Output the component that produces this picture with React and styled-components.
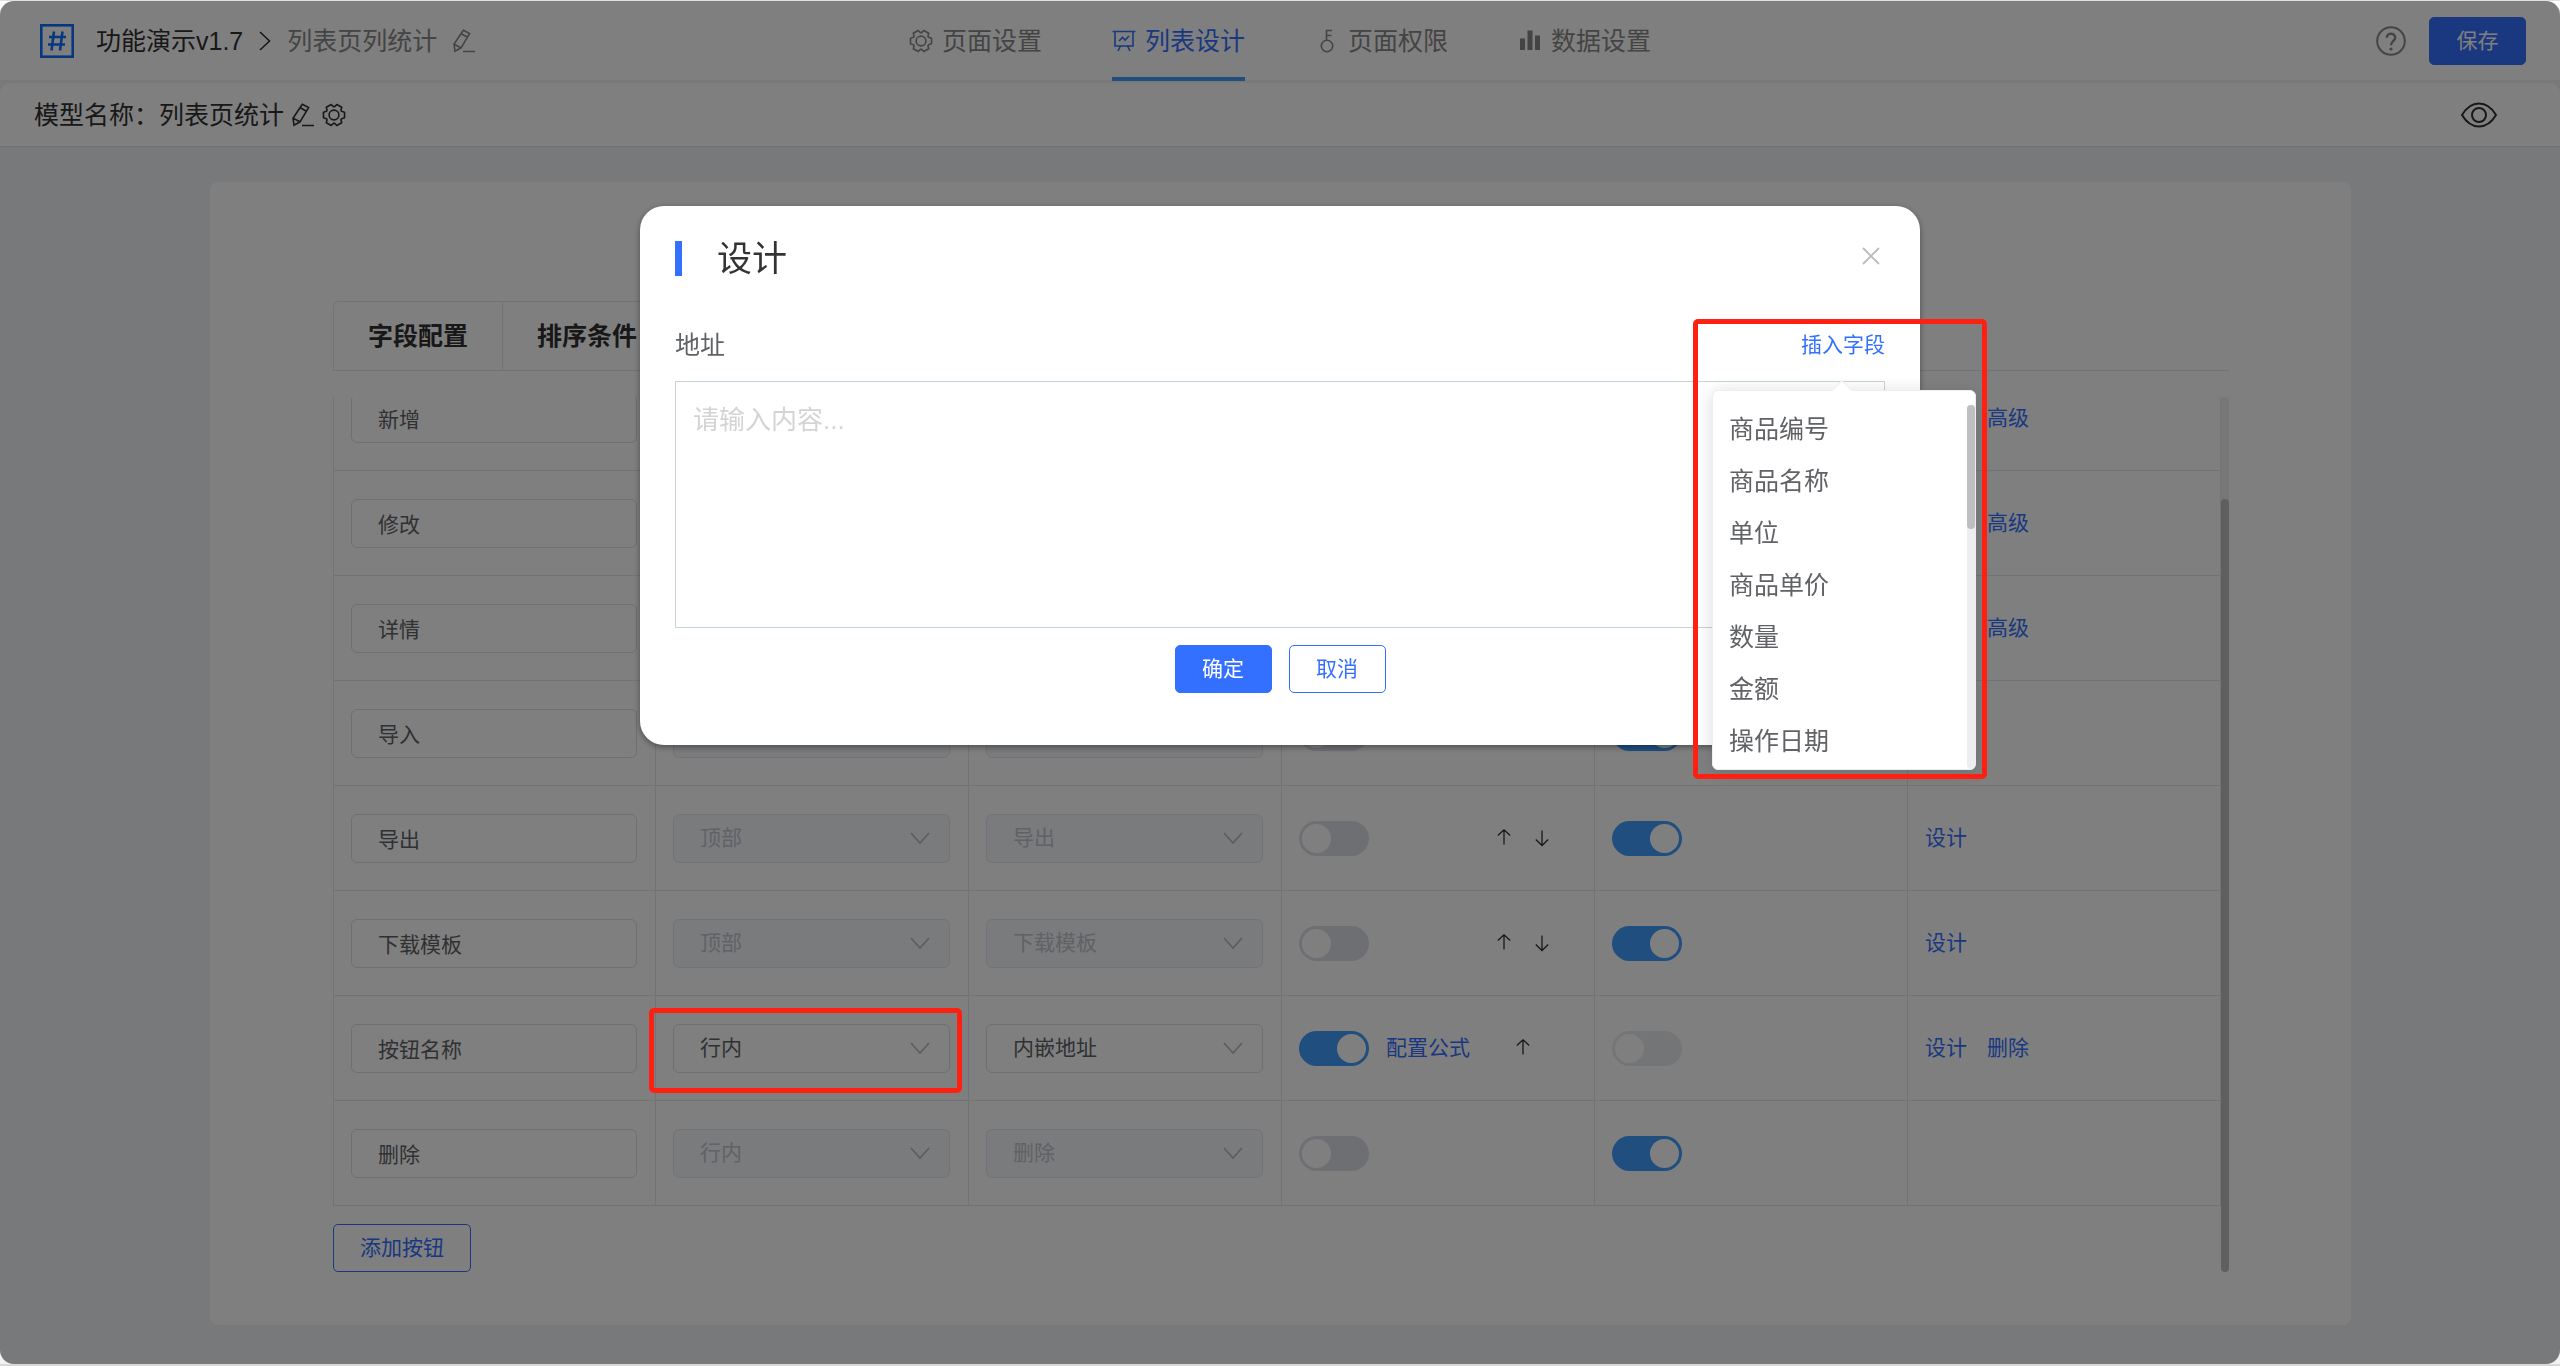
import React from "react";
import styled, { createGlobalStyle, css } from "styled-components";

const blue = "#3370ff";
const line = "#e4e7ed";
const font = `"Liberation Sans", "Noto Sans CJK SC", sans-serif`;

const Global = createGlobalStyle`
  *, *::before, *::after { box-sizing: border-box; }
  html, body { margin: 0; background: #fff; }
  body, button, input, select, textarea { font-family: ${font}; font-size: 21px; line-height: 30px; }
  body { color: #303133; }
  button { cursor: pointer; }
  svg { display: block; flex: none; }
`;

const Page = styled.div`
  min-height: 100vh;
  display: flex;
  flex-direction: column;
  gap: 3px;
  background: #f0f2f5;
  border-top: 1px solid #dfe2e2;
  border-bottom: 2px solid #d8d8d8;
`;

const Header = styled.header`
  height: 79px;
  padding: 0 34px;
  background: #fff;
  display: grid;
  grid-template-columns: 1fr auto 1fr;
  align-items: center;
  font-size: 25px;
`;

const Crumbs = styled.div`
  padding-left: 6px;
  display: flex;
  align-items: center;
  gap: 16px;
  color: #888;
`;

const Brand = styled.span`
  display: flex;
  align-items: center;
  gap: 22px;
  color: #303133;
`;

const Nav = styled.nav`
  display: flex;
  align-self: stretch;
  gap: 70px;
`;

const NavTab = styled.a`
  width: 133px;
  display: flex;
  align-items: center;
  justify-content: space-between;
  position: relative;
  white-space: nowrap;
  text-decoration: none;
  color: ${(p) => (p.$active ? blue : "#888")};
  ${(p) =>
    p.$active &&
    css`
      &::after {
        content: "";
        position: absolute;
        left: 0;
        right: 0;
        bottom: -1px;
        height: 4px;
        background: #409eff;
      }
    `}
`;

const HeaderTools = styled.div`
  display: flex;
  justify-content: flex-end;
  align-items: center;
  gap: 23px;
`;

const IconButton = styled.button`
  padding: 0;
  border: 0;
  background: none;
  color: ${(p) => p.$color || "inherit"};
`;

const Button = styled.button`
  flex: none;
  min-width: 97px;
  height: 48px;
  padding: 0 26px;
  border: 1px solid ${blue};
  border-radius: 5px;
  color: ${(p) => (p.$primary ? "#fff" : blue)};
  background: ${(p) => (p.$primary ? blue : "#fff")};
`;

const SubHeader = styled.div`
  height: 64px;
  padding: 0 63px 0 34px;
  display: flex;
  align-items: center;
  justify-content: space-between;
  background: #fff;
  border-bottom: 1px solid #dfe3ea;
  border-radius: 10px 10px 0 0;
  font-size: 25px;
`;

const ModelName = styled.div`
  display: flex;
  align-items: center;
  gap: 8px;
`;

const Main = styled.main`
  flex: 1;
  display: flex;
  padding: 32px 209px 39px 210px;
`;

const Card = styled.section`
  flex: 1;
  min-width: 0;
  display: flex;
  flex-direction: column;
  padding: 119px 122px 53px 123px;
  background: #fff;
  border-radius: 8px;
`;

const CardTabs = styled.div`
  display: flex;
  border-bottom: 1px solid ${line};
`;

const CardTab = styled.button`
  height: 69px;
  padding: 0 34px;
  background: none;
  border: solid ${line};
  border-width: 1px 1px 0 0;
  font-size: 25px;
  font-weight: 700;
  color: #303133;
  &:first-child {
    border-left-width: 1px;
    border-top-left-radius: 6px;
  }
`;

const Scroller = styled.div`
  margin-top: 26px;
  flex: 1;
  display: grid;
  grid-template-columns: minmax(0, 1fr) 8px;
  max-height: 875px;
`;

const ScrollView = styled.div`
  overflow: hidden;
  min-height: 0;
  display: flex;
  flex-direction: column;
  justify-content: flex-end;
  align-items: flex-start;
  gap: 18px;
`;

const Track = styled.div`
  display: flex;
  flex-direction: column;
  justify-content: ${(p) => (p.$atEnd ? "flex-end" : "flex-start")};
  background: #eee;
  border-radius: 4px;
`;

const Thumb = styled.div`
  height: ${(p) => p.$size};
  border-radius: 4px;
  background: #bfbfbf;
`;

const Table = styled.table`
  flex: none;
  width: 100%;
  table-layout: fixed;
  border-collapse: separate;
  border-spacing: 0;
`;

const NameCol = styled.col`
  width: 323px;
`;

const Cell = styled.td`
  height: 105px;
  padding: 0 18px 0 17px;
  border: solid ${line};
  border-width: 0 1px 1px 0;
  &:first-child {
    border-left-width: 1px;
  }
`;

const field = css`
  width: 100%;
  height: 49px;
  padding: 0 26px;
  border: 1px solid ${(p) => (p.disabled ? line : "#dcdfe6")};
  border-radius: 6px;
  background: ${(p) => (p.disabled ? "#f5f7fa" : "#fff")};
  color: ${(p) => (p.disabled ? "#c0c4cc" : "#606266")};
  outline: 0;
  opacity: 1;
`;

const TextField = styled.input`
  ${field}
  display: block;
`;

const SelectBox = styled.div`
  position: relative;
  svg {
    position: absolute;
    right: 20px;
    top: 18px;
    color: #b4b8bf;
    pointer-events: none;
  }
`;

const SelectField = styled.select`
  ${field}
  display: block;
  appearance: none;
`;

const Switch = styled.input`
  appearance: none;
  display: block;
  flex: none;
  width: 70px;
  height: 35px;
  margin: 0;
  padding: 3px;
  border-radius: 18px;
  background: ${(p) => (p.defaultChecked ? "#409eff" : "#dcdfe6")};
  opacity: ${(p) => (p.disabled ? 0.6 : 1)};
  &::before {
    content: "";
    display: block;
    width: 29px;
    height: 29px;
    margin-left: ${(p) => (p.defaultChecked ? "auto" : 0)};
    border-radius: 50%;
    background: #fff;
  }
`;

const ShowCell = styled.div`
  display: grid;
  grid-template-columns: 70px 84px 1fr;
  column-gap: 17px;
  align-items: center;
`;

const Arrows = styled.div`
  grid-column: 3;
  padding-right: 18px;
  display: flex;
  justify-content: center;
  gap: 22px;
`;

const Links = styled.div`
  display: flex;
  gap: 20px;
`;

const Link = styled.a`
  color: ${blue};
  text-decoration: none;
  white-space: nowrap;
`;

const Mark = styled.div`
  position: absolute;
  z-index: 30;
  inset: ${(p) => p.$inset};
  border: 5px solid #ff2012;
  border-radius: 5px;
  pointer-events: none;
`;

const Overlay = styled.div`
  position: fixed;
  z-index: 10;
  inset: 1px 0 2px;
  padding-top: 205px;
  border-radius: 14px;
  background: rgba(0, 0, 0, 0.5);
`;

const Dialog = styled.div`
  width: 50%;
  margin: 0 auto;
  padding: 35px 35px 52px;
  border-radius: 24px;
  background: #fff;
  box-shadow: 0 2px 6px rgba(0, 0, 0, 0.4);
`;

const DialogHead = styled.div`
  display: flex;
  align-items: flex-start;
  justify-content: space-between;
`;

const Title = styled.h2`
  margin: 0;
  padding-left: 35px;
  border-left: 7px solid ${blue};
  font-size: 35px;
  line-height: 35px;
  font-weight: 400;
  color: #333;
`;

const CloseButton = styled(IconButton)`
  padding: 6px 5px;
  color: #bbb;
`;

const FieldHead = styled.div`
  margin: 51px 0 18px;
  display: flex;
  align-items: center;
  justify-content: space-between;
`;

const Label = styled.label`
  font-size: 25px;
  line-height: 36px;
  color: #606266;
`;

const TextArea = styled.textarea`
  display: block;
  width: 100%;
  height: 247px;
  padding: 20px 17px;
  border: 1px solid #c6d3d9;
  font-size: 26px;
  line-height: 36px;
  resize: none;
  outline: 0;
  &::placeholder {
    color: #d4d4d4;
  }
`;

const DialogFoot = styled.div`
  margin-top: 17px;
  display: flex;
  justify-content: center;
  gap: 17px;
`;

const Anchor = styled.div`
  position: relative;
`;

const Popover = styled.div`
  position: absolute;
  z-index: 20;
  top: 60px;
  left: 50%;
  width: 264px;
  margin-left: -131px;
  padding: 14px 0;
  border: 1px solid #ebeef5;
  border-radius: 6px;
  background: #fff;
  box-shadow: 0 2px 18px rgba(0, 0, 0, 0.14);
  &::before {
    content: "";
    position: absolute;
    top: -8px;
    left: 50%;
    width: 14px;
    height: 14px;
    margin-left: -9px;
    background: #fff;
    border: solid #ebeef5;
    border-width: 1px 0 0 1px;
    transform: rotate(45deg);
  }
`;

const OptionArea = styled.div`
  display: grid;
  grid-template-columns: 1fr 8px;
  height: 350px;
`;

const Options = styled.ul`
  margin: 0;
  padding: 0 16px;
  list-style: none;
`;

const Option = styled.li`
  height: 52px;
  font-size: 25px;
  line-height: 48px;
  color: #606266;
`;

const Svg = ({ w, h = w, sw = 1.6, children }) => (
  <svg width={w} height={h} viewBox={`0 0 ${w} ${h}`} fill="none" stroke="currentColor" strokeWidth={sw} aria-hidden="true">
    {children}
  </svg>
);

const cog = Array.from({ length: 6 }, (_, i) =>
  [
    [-26, 8.4],
    [-15, 10.9],
    [15, 10.9],
    [26, 8.4],
  ].map(([d, r]) => {
    const a = ((i * 60 + d) * Math.PI) / 180;
    return `${(12 + r * Math.cos(a)).toFixed(2)},${(12 + r * Math.sin(a)).toFixed(2)}`;
  })
)
  .flat()
  .join(" ");

const Logo = () => (
  <Svg w={34} sw={2.6}>
    <g stroke="#0f6fff">
      <rect x="1.3" y="1.3" width="31.4" height="31.4" />
      <path d="M14 7.5 11.5 26.5M22.5 7.5 20 26.5M9 13h17M8 20.5h17" />
    </g>
  </Svg>
);
const Pencil = () => (
  <Svg w={22} h={24}>
    <path d="M10.300 1.200 16.600 4.600 8 18.800 2 22.300 1 15.200ZM8.300 4.700l6.200 3.500M1 15.200l7 3.600M10 22.500h12" />
  </Svg>
);
const Gear = () => (
  <Svg w={24}>
    <polygon points={cog} strokeLinejoin="round" />
    <circle cx="12" cy="12" r="4.900" />
  </Svg>
);
const Board = () => (
  <Svg w={24}>
    <path d="M.5 2.500h23M3 2.500v14.500h18V2.500M8.500 17 6 22M15.500 17 18 22M7 12l3.500-3.500 2.500 2.500L17 7" />
  </Svg>
);
const Key = () => (
  <Svg w={24}>
    <circle cx="12" cy="17" r="5.700" />
    <path d="M11.500 11.500V1.500h5.500M11.500 6.500h5" />
  </Svg>
);
const Bars = () => (
  <Svg w={24}>
    <path d="M2 9.500h5V21H2ZM9.500 1.500h5V21h-5ZM17 6.500h5V21h-5Z" fill="currentColor" stroke="none" />
  </Svg>
);
const Help = () => (
  <Svg w={30} sw={2}>
    <circle cx="15" cy="15" r="13.800" />
    <path d="M10.800 11.800c0-5.400 8.400-5.400 8.400 0 0 3.200-4.200 3.200-4.200 7.400" strokeWidth="2.400" />
    <circle cx="15" cy="23" r="1.600" fill="currentColor" stroke="none" />
  </Svg>
);
const Eye = () => (
  <Svg w={36} h={26} sw={2}>
    <path d="M1 13C10-2.300 26-2.300 35 13 26 28.300 10 28.300 1 13Z" />
    <circle cx="18" cy="13" r="7" />
  </Svg>
);
const Chevron = () => (
  <Svg w={20} h={13}>
    <path d="m1 1 9 10 9-10" />
  </Svg>
);
const Crumb = () => (
  <Svg w={12} h={20}>
    <path d="m1 1 9.500 9L1 19" stroke="#303133" />
  </Svg>
);
const Arrow = ({ down }) => (
  <Svg w={16} h={18} sw={1.3}>
    <path d={down ? "M8 1.500v15M1.800 10.500 8 16.500l6.200-6" : "M8 15.500v-15M1.800 6.500 8 .800l6.200 5.700"} />
  </Svg>
);
const Cross = () => (
  <Svg w={18} sw={1.8}>
    <path d="m1 1 16 16M17 1 1 17" />
  </Svg>
);

const tabs = [
  { text: "页面设置", Icon: Gear },
  { text: "列表设计", Icon: Board, active: true },
  { text: "页面权限", Icon: Key },
  { text: "数据设置", Icon: Bars },
];

const rows = [
  { name: "新增", place: "顶部", action: "新增", arrows: 1, on: true, links: ["设计", "高级"] },
  { name: "修改", place: "行内", action: "修改", arrows: 2, on: true, links: ["设计", "高级"] },
  { name: "详情", place: "行内", action: "详情", arrows: 2, on: true, links: ["设计", "高级"] },
  { name: "导入", place: "顶部", action: "导入", arrows: 2, on: true, links: ["设计"] },
  { name: "导出", place: "顶部", action: "导出", arrows: 2, on: true, links: ["设计"] },
  { name: "下载模板", place: "顶部", action: "下载模板", arrows: 2, on: true, links: ["设计"] },
  { name: "按钮名称", place: "行内", action: "内嵌地址", custom: true, arrows: 1, on: false, links: ["设计", "删除"] },
  { name: "删除", place: "行内", action: "删除", arrows: 0, on: true, links: [] },
];

const options = ["商品编号", "商品名称", "单位", "商品单价", "数量", "金额", "操作日期"];

function Picker({ label, value, disabled, marked }) {
  return (
    <SelectBox>
      <SelectField aria-label={label} disabled={disabled} defaultValue={value}>
        <option>{value}</option>
      </SelectField>
      <Chevron />
      {marked && <Mark $inset="-16px -12px -20px -24px" />}
    </SelectBox>
  );
}

function Row({ row }) {
  return (
    <tr>
      <Cell>
        <TextField aria-label="按钮名称" defaultValue={row.name} />
      </Cell>
      <Cell>
        <Picker label="位置" value={row.place} disabled={!row.custom} marked={row.custom} />
      </Cell>
      <Cell>
        <Picker label="动作" value={row.action} disabled={!row.custom} />
      </Cell>
      <Cell>
        <ShowCell>
          <Switch type="checkbox" role="switch" aria-label="条件" defaultChecked={!!row.custom} />
          {row.custom && <Link href="#formula">配置公式</Link>}
          <Arrows>
            {row.arrows > 0 && (
              <IconButton aria-label="上移">
                <Arrow />
              </IconButton>
            )}
            {row.arrows > 1 && (
              <IconButton aria-label="下移">
                <Arrow down />
              </IconButton>
            )}
          </Arrows>
        </ShowCell>
      </Cell>
      <Cell>
        <Switch type="checkbox" role="switch" aria-label="启用" defaultChecked={row.on} disabled={!row.on} />
      </Cell>
      <Cell>
        <Links>
          {row.links.map((t) => (
            <Link key={t} href="#row">
              {t}
            </Link>
          ))}
        </Links>
      </Cell>
    </tr>
  );
}

export default function App() {
  return (
    <>
      <Global />
      <Page>
        <Header>
          <Crumbs>
            <Brand>
              <Logo />
              功能演示v1.7
            </Brand>
            <Crumb />
            <span>列表页列统计</span>
            <IconButton aria-label="编辑" $color="#888">
              <Pencil />
            </IconButton>
          </Crumbs>
          <Nav>
            {tabs.map(({ text, Icon, active }) => (
              <NavTab key={text} href="#tab" $active={active}>
                <Icon />
                {text}
              </NavTab>
            ))}
          </Nav>
          <HeaderTools>
            <IconButton aria-label="帮助" $color="#888">
              <Help />
            </IconButton>
            <Button $primary>保存</Button>
          </HeaderTools>
        </Header>
        <SubHeader>
          <ModelName>
            <span>模型名称：列表页统计</span>
            <IconButton aria-label="编辑" $color="#303133">
              <Pencil />
            </IconButton>
            <IconButton aria-label="设置" $color="#303133">
              <Gear />
            </IconButton>
          </ModelName>
          <IconButton aria-label="预览" $color="#303133">
            <Eye />
          </IconButton>
        </SubHeader>
        <Main>
          <Card>
            <CardTabs>
              <CardTab>字段配置</CardTab>
              <CardTab>排序条件</CardTab>
            </CardTabs>
            <Scroller>
              <ScrollView>
                <Table>
                  <colgroup>
                    <NameCol />
                    <col />
                    <col />
                    <col />
                    <col />
                    <col />
                  </colgroup>
                  <tbody>
                    {rows.map((row) => (
                      <Row key={row.name} row={row} />
                    ))}
                  </tbody>
                </Table>
                <Button>添加按钮</Button>
              </ScrollView>
              <Track $atEnd>
                <Thumb $size="88.3%" />
              </Track>
            </Scroller>
          </Card>
        </Main>
      </Page>
      <Overlay>
        <Dialog role="dialog" aria-labelledby="dialog-title">
          <DialogHead>
            <Title id="dialog-title">设计</Title>
            <CloseButton aria-label="关闭">
              <Cross />
            </CloseButton>
          </DialogHead>
          <FieldHead>
            <Label htmlFor="address">地址</Label>
            <Anchor>
              <Link href="#insert">插入字段</Link>
              <Popover>
                <OptionArea>
                  <Options>
                    {options.map((o) => (
                      <Option key={o}>{o}</Option>
                    ))}
                  </Options>
                  <Track>
                    <Thumb $size="124px" />
                  </Track>
                </OptionArea>
                <Mark $inset="-72px -12px -10px -20px" />
              </Popover>
            </Anchor>
          </FieldHead>
          <TextArea id="address" placeholder="请输入内容..." />
          <DialogFoot>
            <Button $primary>确定</Button>
            <Button>取消</Button>
          </DialogFoot>
        </Dialog>
      </Overlay>
    </>
  );
}
